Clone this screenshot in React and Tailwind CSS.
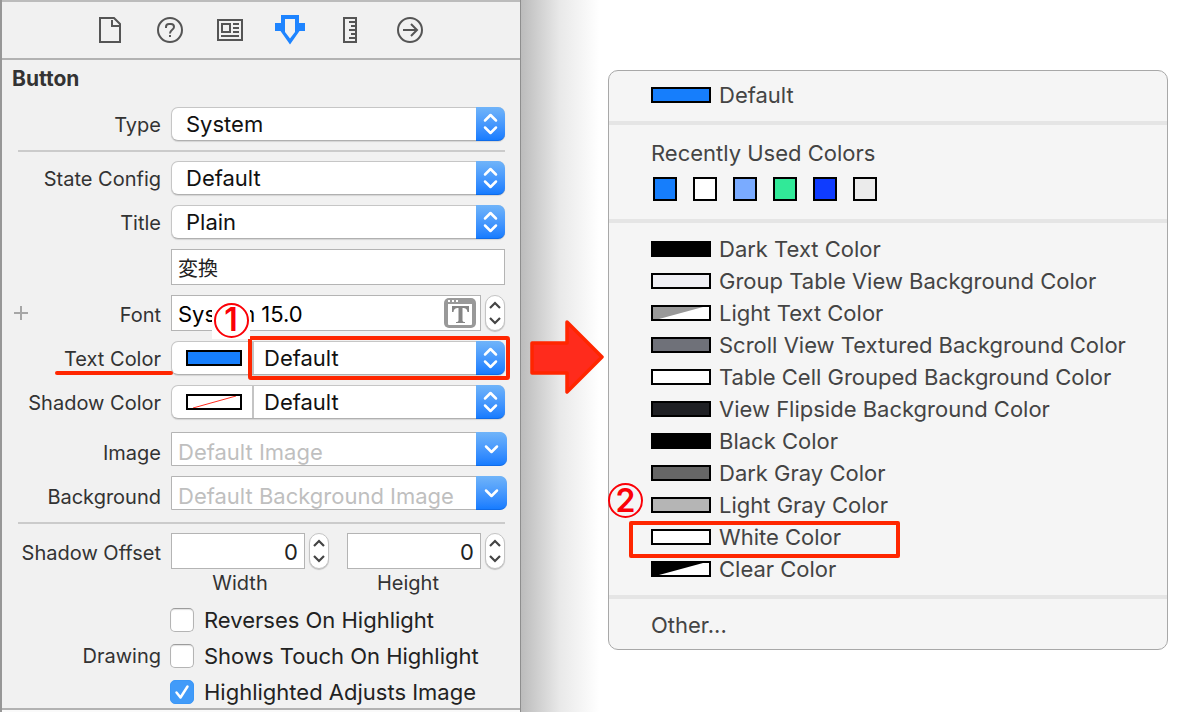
import React from "react";

const tabIcons = [
  {
    name: "File",
    art: <path d="M5 3h14l6 6v18H5zM17 5v6h7" />,
  },
  {
    name: "Quick Help",
    art: (
      <>
        <circle cx="15" cy="15" r="12" />
        <path d="M11 13v-1a3 3 0 0 1 3-3h2a3 3 0 0 1 3 3c0 3-4 2.500-4 6.500M15 20v2" />
      </>
    ),
  },
  {
    name: "Identity",
    art: <path d="M3 5h24v20H3zM7 9h8v8H7zM18 9h6M18 13h6M18 17h6M6 21h18" />,
  },
  {
    name: "Attributes",
    active: true,
    art: (
      <path
        stroke="none"
        fill="#1e84ff"
        fillRule="evenodd"
        d="M6 0h18v8h6v8h-5.500L15 29.500 5.500 16H0V8h6zM10 4v13l5 6.500 5-6.500V4z"
      />
    ),
  },
  {
    name: "Size",
    art: <path d="M9 3h12v24H9zM14 7h6M16 11h4M14 15h6M16 19h4M14 23h6" />,
  },
  {
    name: "Connections",
    art: (
      <>
        <circle cx="15" cy="15" r="12" />
        <path d="M8 15h14M16 9l6 6-6 6" />
      </>
    ),
  },
];

const recentColors = [
  ["Blue", "bg-[#167efc]"],
  ["White", "bg-white"],
  ["Light Blue", "bg-[#7aabff]"],
  ["Green", "bg-[#31e998]"],
  ["Deep Blue", "bg-[#0f3cff]"],
  ["Pale Gray", "bg-[#ebebeb]"],
];

const namedColors = [
  { name: "Dark Text Color", fill: "bg-black" },
  { name: "Group Table View Background Color", fill: "bg-[#efeff4]" },
  { name: "Light Text Color", fill: "bg-white", corner: "#999999" },
  { name: "Scroll View Textured Background Color", fill: "bg-[#6f7179]" },
  { name: "Table Cell Grouped Background Color", fill: "bg-white" },
  { name: "View Flipside Background Color", fill: "bg-[#1f2024]" },
  { name: "Black Color", fill: "bg-black" },
  { name: "Dark Gray Color", fill: "bg-[#666666]" },
  { name: "Light Gray Color", fill: "bg-[#b5b5b5]", step: "2" },
  { name: "White Color", fill: "bg-white", marked: true },
  { name: "Clear Color", fill: "bg-white", corner: "#000000" },
];

function Row({ label, htmlFor, className = "", labelClass = "pt-[2px]", children }) {
  const labelStyle =
    "w-[159px] shrink-0 text-right text-[20px] leading-6 whitespace-nowrap text-[#333]";
  return (
    <div className={`relative flex items-center gap-[10px] ${className}`}>
      {htmlFor ? (
        <label htmlFor={htmlFor} className={`${labelStyle} ${labelClass}`}>
          {label}
        </label>
      ) : (
        <span className={labelStyle}>{label}</span>
      )}
      {children}
    </div>
  );
}

function BlueArrows({ single }) {
  return (
    <span
      className={`pointer-events-none absolute inset-y-0 right-0 rounded-r-[7px] border-b border-[#0f6be8] bg-linear-to-b from-[#70b4f9] to-[#167cff] ${
        single ? "w-[31px]" : "w-[29px]"
      }`}
    >
      <svg
        viewBox={single ? "0 0 31 34" : "0 0 29 34"}
        className="h-[34px] w-full"
        fill="none"
        stroke="#fff"
        strokeWidth="2.500"
        strokeLinecap="round"
        strokeLinejoin="round"
      >
        {single ? (
          <path d="M10 14.500l5.500 5.500L21 14.500" />
        ) : (
          <path d="M9 13.500l5.500-5.500 5.500 5.500M9 20.500l5.500 5.500 5.500-5.500" />
        )}
      </svg>
    </span>
  );
}

function Popup({ id, value, well }) {
  return (
    <div className="relative flex h-[34px] min-w-0 flex-1 rounded-[7px] border border-[#c6c6c6] border-b-[#b0b0b0] bg-white shadow-[0_1px_1px_rgba(0,0,0,0.12)]">
      {well && (
        <button
          type="button"
          aria-label="Choose color"
          className="flex w-[82px] shrink-0 items-center border-r-2 border-[#c4c4c4] pl-[14px]"
        >
          {well}
        </button>
      )}
      <select
        id={id}
        className={`min-w-0 flex-1 appearance-none bg-transparent text-[22px] leading-8 text-[#111] outline-none ${
          well ? "pl-[10px]" : "pl-[14px]"
        }`}
      >
        <option>{value}</option>
      </select>
      <span className="pointer-events-none absolute -inset-px">
        <BlueArrows />
      </span>
    </div>
  );
}

function Combo({ id, placeholder }) {
  return (
    <div className="relative -mr-[2px] h-[34px] min-w-0 flex-1">
      <input
        id={id}
        placeholder={placeholder}
        className="h-full w-full rounded-r-[8px] border border-[#b4b4b4] bg-white pt-[6px] pr-8 pl-[6px] text-[22px] outline-none placeholder:text-[#bfbfbf]"
      />
      <BlueArrows single />
    </div>
  );
}

function Stepper({ name }) {
  return (
    <div className="flex h-9 w-5 shrink-0 flex-col rounded-full border border-[#c4c4c4] bg-white shadow-[0_1px_1px_rgba(0,0,0,0.2)]">
      <button type="button" aria-label={`Increase ${name}`} className="flex-1">
        <svg viewBox="0 0 18 17" className="h-[17px] w-[18px]" fill="none" stroke="#444" strokeWidth="2.200">
          <path d="M4 12l5-5 5 5" />
        </svg>
      </button>
      <button type="button" aria-label={`Decrease ${name}`} className="flex-1">
        <svg viewBox="0 0 18 17" className="h-[17px] w-[18px]" fill="none" stroke="#444" strokeWidth="2.200">
          <path d="M4 5l5 5 5-5" />
        </svg>
      </button>
    </div>
  );
}

function Check({ label, checked }) {
  return (
    <label className="flex items-center gap-[10px] text-[22px] leading-6 whitespace-nowrap text-[#222]">
      <span className="relative -ml-px size-6">
        <input
          type="checkbox"
          defaultChecked={checked}
          className="peer block size-6 appearance-none rounded-[5px] border border-[#b4b4b4] border-t-[#9c9c9c] bg-white shadow-[inset_0_1px_1px_rgba(0,0,0,0.12)] checked:border-[#3b97f7] checked:bg-[#419bf9] checked:shadow-none"
        />
        <svg
          viewBox="0 0 24 24"
          className="pointer-events-none absolute inset-0 hidden size-6 peer-checked:block"
          fill="none"
          stroke="#fff"
          strokeWidth="2.500"
          strokeLinecap="round"
          strokeLinejoin="round"
        >
          <path d="M6.500 12.500l4 5L17.500 6.500" />
        </svg>
      </span>
      {label}
    </label>
  );
}

function StepBadge({ children, className }) {
  return (
    <span className={`pointer-events-none absolute flex items-center justify-center ${className}`}>
      <span className="flex size-[35px] items-center justify-center rounded-full border-2 border-[#fb0007] text-[32px] leading-none font-semibold text-[#fb0007]">
        {children}
      </span>
    </span>
  );
}

function Swatch({ fill, corner, className = "w-[60px]" }) {
  return (
    <span className={`block h-4 shrink-0 border-2 border-black ${fill} ${className}`}>
      {corner && (
        <svg viewBox="0 0 56 12" className="block h-3 w-full">
          <path d="M0 0h50L6 12H0z" fill={corner} />
        </svg>
      )}
    </span>
  );
}

function Separator() {
  return <hr className="h-1 border-0 bg-[#e5e5e5]" />;
}

function Inspector() {
  return (
    <aside className="flex w-[521px] shrink-0 flex-col border-r border-l-2 border-r-[#8e8e8e] border-l-[#979797] bg-[#f1f1f1]">
      <nav className="flex h-[60px] justify-center border-t-2 border-b-2 border-t-[#bcbcbc] border-b-[#b2b2b2] pr-[2px]">
        {tabIcons.map(({ name, art, active }) => (
          <button
            key={name}
            type="button"
            aria-label={`${name} inspector`}
            aria-pressed={!!active}
            className="flex w-[60px] items-center justify-center"
          >
            <svg viewBox="0 0 30 30" className="size-[30px]" fill="none" stroke="#555" strokeWidth="2">
              {art}
            </svg>
          </button>
        ))}
      </nav>

      <form className="flex flex-col border-b-2 border-[#b2b2b2] pr-[15px] pb-1">
        <h1 className="flex h-[38px] items-center pl-[10px] text-[21px] font-bold text-[#333]">Button</h1>

        <Row label="Type" htmlFor="type" className="mt-[9px]">
          <Popup id="type" value="System" />
        </Row>

        <hr className="my-[9px] ml-4 h-[2px] border-0 bg-[#cbcbcb]" />

        <div className="flex flex-col gap-[10px]">
          <Row label="State Config" htmlFor="state">
            <Popup id="state" value="Default" />
          </Row>
          <Row label="Title" htmlFor="title">
            <Popup id="title" value="Plain" />
          </Row>
          <Row label="">
            <input
              aria-label="Title text"
              defaultValue="変換"
              className="h-9 min-w-0 flex-1 border border-[#b4b4b4] bg-white px-[6px] font-['Noto_Sans_CJK_JP',sans-serif] text-[20px] text-[#222] outline-none"
            />
          </Row>
          <Row label="Font" htmlFor="font" labelClass="pt-[4px]">
            <button type="button" aria-label="Add font variation" className="absolute left-[11px] flex size-4 items-center justify-center">
              <svg viewBox="0 0 16 16" className="size-4" stroke="#a6a6a6" strokeWidth="2">
                <path d="M1 8h14M8 1v14" />
              </svg>
            </button>
            <div className="flex min-w-0 flex-1 gap-1">
              <div className="relative min-w-0 flex-1">
                <input
                  id="font"
                  defaultValue="System 15.0"
                  className="h-9 w-full border border-[#b4b4b4] bg-white pt-[2px] pr-10 pl-[6px] text-[22px] text-black outline-none"
                />
                <button type="button" aria-label="Choose font" className="absolute top-[3px] right-[5px]">
                  <svg viewBox="0 0 32 30" className="h-[30px] w-8">
                    <rect width="32" height="30" rx="5" fill="#999" />
                    <path d="M4 2h2v2H4zM8 2h2v2H8zM12 2h2v2h-2zM4 6h24v20a1 1 0 0 1-1 1H5a1 1 0 0 1-1-1z" fill="#fff" />
                    <path d="M8 8h17v6h-1.500c-.5-3-1.500-4-5-4v12c0 1.500.5 2 2.500 2v1h-9v-1c2 0 2.500-.5 2.500-2V10c-3.500 0-4.500 1-5 4H8z" fill="#858585" />
                  </svg>
                </button>
              </div>
              <Stepper name="font size" />
            </div>
            <StepBadge className="top-[6px] left-[210px] z-10 h-[38px] w-[38px] bg-white">1</StepBadge>
          </Row>
          <Row label="Text Color" htmlFor="text-color">
            <Popup
              id="text-color"
              value="Default"
              well={<Swatch fill="bg-[#167efc]" className="w-14" />}
            />
            <span className="pointer-events-none absolute top-[30px] left-[53px] h-1 w-[118px] rounded-full bg-[#ff2600]" />
            <span className="pointer-events-none absolute -top-[5px] -right-[5px] h-[44px] w-[262px] rounded-[3px] border-4 border-[#ff2600]" />
          </Row>
          <Row label="Shadow Color" htmlFor="shadow-color">
            <Popup
              id="shadow-color"
              value="Default"
              well={
                <span className="block h-4 w-14 border-2 border-black bg-white">
                  <svg viewBox="0 0 52 12" className="block h-3 w-full" stroke="#ff2d20">
                    <path d="M5 12L48 0" />
                  </svg>
                </span>
              }
            />
          </Row>
        </div>

        <div className="mt-[13px] flex flex-col gap-[10px]">
          <Row label="Image" htmlFor="image" labelClass="pt-[8px]">
            <Combo id="image" placeholder="Default Image" />
          </Row>
          <Row label="Background" htmlFor="background" labelClass="pt-[8px]">
            <Combo id="background" placeholder="Default Background Image" />
          </Row>
        </div>

        <hr className="mt-3 mb-[9px] ml-4 h-[2px] border-0 bg-[#cbcbcb]" />

        <Row label="Shadow Offset" htmlFor="offset-width" labelClass="pt-[4px]">
          <div className="flex min-w-0 flex-1 gap-[18px]">
            {["Width", "Height"].map((side) => (
              <div key={side} className="flex min-w-0 flex-1 gap-1">
                <input
                  id={`offset-${side.toLowerCase()}`}
                  aria-label={side}
                  defaultValue="0"
                  className="h-9 min-w-0 flex-1 border border-[#b4b4b4] bg-white px-[6px] pt-[2px] text-right text-[22px] text-[#222] outline-none"
                />
                <Stepper name={side} />
              </div>
            ))}
          </div>
        </Row>
        <div className="ml-[169px] flex h-7 gap-[18px] text-center text-[20px] leading-7 text-[#333]">
          <span className="flex-1 pr-5 pl-1">Width</span>
          <span className="flex-1 pr-8">Height</span>
        </div>

        <div className="mt-[11px] flex flex-col gap-3">
          <Row label="">
            <Check label="Reverses On Highlight" />
          </Row>
          <Row label="Drawing">
            <Check label="Shows Touch On Highlight" />
          </Row>
          <Row label="">
            <Check label="Highlighted Adjusts Image" checked />
          </Row>
        </div>
      </form>
      <div className="flex-1 bg-[#fafafa]" />
    </aside>
  );
}

function ColorMenu() {
  return (
    <div
      role="menu"
      className="mt-[8px] mr-[17px] min-w-0 flex-1 rounded-[10px] border border-[#a8a8a8] bg-[#f5f5f5] py-2 text-[22px] leading-8 whitespace-nowrap text-[#444]"
    >
      <button type="button" role="menuitem" className="mb-[10px] flex h-8 w-full items-center gap-2 pl-[42px]">
        <Swatch fill="bg-[#167efc]" />
        Default
      </button>
      <Separator />
      <h2 className="mt-3 pl-[42px]">Recently Used Colors</h2>
      <div className="mt-2 mb-[18px] flex gap-4 pl-11">
        {recentColors.map(([name, fill]) => (
          <button
            key={name}
            type="button"
            role="menuitem"
            aria-label={name}
            className={`size-6 border-2 border-black ${fill}`}
          />
        ))}
      </div>
      <Separator />
      <div className="my-[10px]">
        {namedColors.map(({ name, fill, corner, step, marked }) => (
          <button
            key={name}
            type="button"
            role="menuitem"
            className="relative flex h-8 w-full items-center gap-2 pl-[42px]"
          >
            <Swatch fill={fill} corner={corner} />
            {name}
            {step && <StepBadge className="-top-[6px] -left-px">{step}</StepBadge>}
            {marked && (
              <span className="pointer-events-none absolute top-0 left-5 h-[37px] w-[271px] rounded-[2px] border-4 border-[#ff2600]" />
            )}
          </button>
        ))}
      </div>
      <Separator />
      <button type="button" role="menuitem" className="mt-[10px] block w-full pl-[42px] text-left">
        Other...
      </button>
    </div>
  );
}

export default function App() {
  return (
    <main className="flex min-h-screen bg-white font-['Inter',sans-serif]">
      <Inspector />
      <div className="flex min-w-0 flex-1 items-center">
        <div className="flex w-[87px] shrink-0 items-center self-stretch bg-linear-to-r from-[#bcbcbc] via-[#e9e9e9] via-45% to-white to-90% pt-[2px] pl-2">
          <svg viewBox="0 0 75 76" className="h-[76px] w-[75px]">
            <path
              d="M3 24h35V3l35 35-35 35V54H3z"
              fill="#ff2b1c"
              stroke="#ff2600"
              strokeWidth="3.500"
              strokeLinejoin="round"
            />
          </svg>
        </div>
        <ColorMenu />
      </div>
    </main>
  );
}
